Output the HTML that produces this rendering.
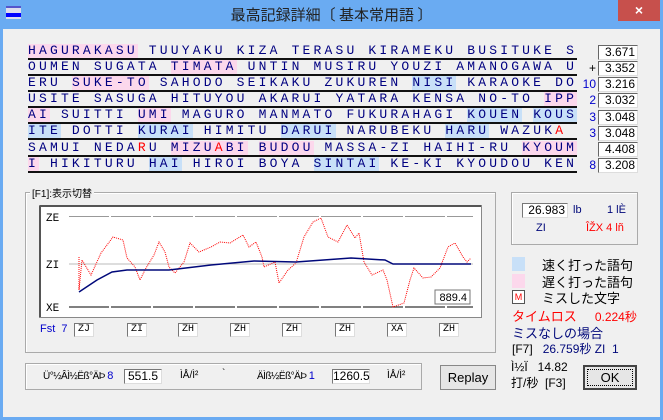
<!DOCTYPE html>
<html><head><meta charset="utf-8"><style>
*{margin:0;padding:0;box-sizing:border-box}
body{width:663px;height:420px;background:#6aabf2;position:relative;overflow:hidden;font-family:"Liberation Sans","Noto Sans CJK JP",sans-serif}
.abs{position:absolute}
.win{left:3px;top:29px;width:657px;height:388px;background:#f0f0f0}
.title{left:0;top:0;width:663px;height:29px;text-align:center;font-size:15px;line-height:29px;color:#222;font-family:"Noto Sans CJK JP",sans-serif}
.close{left:618px;top:0;width:42px;height:21px;background:#c7504c;color:#fff;text-align:center;font-size:14px;line-height:20px;font-weight:bold}
.row{position:absolute;left:28px;width:549px;height:16px;border-bottom:2px solid #111;font-family:"Liberation Mono",monospace;font-size:13px;letter-spacing:3.18px;color:#000080;white-space:pre;line-height:14px;overflow:hidden}
.p{background:#fcd8ec}.b{background:#c8e0f8}.r{color:#f00}
.sc{position:absolute;left:598px;width:40px;height:15px;background:#fff;border:1px solid #666;border-right-color:#ddd;border-bottom-color:#ddd;font-size:12px;text-align:right;padding-right:2px;line-height:13px;color:#000}
.pre{position:absolute;width:14px;text-align:right;left:582px;font-size:12px;color:#00c}
.grp{border:1px solid #aaa;box-shadow:inset 1px 1px #fff}
.tb{background:#fff;border:1px solid #777;border-right-color:#ddd;border-bottom-color:#ddd;font-size:10px;text-align:center;line-height:12px;font-family:"Liberation Mono",monospace}
.btn{border:1px solid #888;background:#e6e6e6;text-align:center;font-size:13px;line-height:24px}
.j{font-family:"Liberation Sans","Noto Sans CJK JP",sans-serif;font-size:13px}
</style></head><body>
<div class="abs" style="left:6px;top:6px;width:15px;height:13px;background:#dde;border-top:2px solid #55c"><div style="margin-top:5px;height:4px;background:#00f"></div></div>
<div class="abs title">最高記録詳細〔 基本常用語 〕</div>
<div class="abs close">×</div>
<div class="abs win"></div>

<div class="row" style="top:44px"><span class="p">HAGURAKASU</span> TUUYAKU KIZA TERASU KIRAMEKU BUSITUKE S</div>
<div class="row" style="top:60px">OUMEN SUGATA <span class="p">TIMATA</span> UNTIN MUSIRU YOUZI AMANOGAWA U</div>
<div class="row" style="top:76px">ERU <span class="p">SUKE-TO</span> SAHODO SEIKAKU ZUKUREN <span class="b">NISI</span> KARAOKE DO</div>
<div class="row" style="top:92px">USITE SASUGA HITUYOU AKARUI YATARA KENSA NO-TO <span class="p">IPP</span></div>
<div class="row" style="top:108px"><span class="p">AI</span> SUITTI <span class="p">UMI</span> MAGURO MANMATO FUKURAHAGI <span class="b">KOUEN</span> <span class="b">KOUS</span></div>
<div class="row" style="top:124px"><span class="b">ITE</span> DOTTI <span class="b">KURAI</span> HIMITU <span class="b">DARUI</span> NARUBEKU <span class="b">HARU</span> WAZUK<span class="r">A</span></div>
<div class="row" style="top:141px">SAMUI NEDA<span class="r">R</span>U <span class="p">MIZU<span class="r">A</span>BI</span> <span class="p">BUDOU</span> MASSA-ZI HAIHI-RU <span class="p">KYOUM</span></div>
<div class="row" style="top:157px"><span class="p">I</span> HIKITURU <span class="b">HAI</span> HIROI BOYA <span class="b">SINTAI</span> KE-KI KYOUDOU KEN</div>

<div class="sc" style="top:45px">3.671</div>
<div class="pre" style="top:61px;color:#000">+</div><div class="sc" style="top:61px">3.352</div>
<div class="pre" style="top:77px">10</div><div class="sc" style="top:77px">3.216</div>
<div class="pre" style="top:93px">2</div><div class="sc" style="top:93px">3.032</div>
<div class="pre" style="top:110px">3</div><div class="sc" style="top:110px">3.048</div>
<div class="pre" style="top:126px">3</div><div class="sc" style="top:126px">3.048</div>
<div class="sc" style="top:142px">4.408</div>
<div class="pre" style="top:158px">8</div><div class="sc" style="top:158px">3.208</div>

<div class="abs grp" style="left:25px;top:192px;width:471px;height:161px"></div>
<div class="abs j" style="left:30px;top:185px;background:#f0f0f0;padding:0 2px;font-size:10px">[F1]:表示切替</div>
<svg class="abs" style="left:39px;top:205px" width="443" height="113">
<rect x="0.5" y="0.5" width="442" height="112" fill="#fff" stroke="#888"/>
<line x1="1" y1="1" x2="442" y2="1" stroke="#555" stroke-width="2"/>
<line x1="1" y1="1" x2="1" y2="112" stroke="#555" stroke-width="2"/>
<line x1="30" y1="11.5" x2="434" y2="11.5" stroke="#999" stroke-dasharray="40,2"/>
<line x1="30" y1="59" x2="434" y2="59" stroke="#bbb"/>
<line x1="30" y1="102" x2="434" y2="102" stroke="#000" stroke-dasharray="40,2"/>
<text x="7" y="16" font-size="11" font-family="Liberation Mono">ZE</text>
<text x="7" y="63" font-size="11" font-family="Liberation Mono">ZI</text>
<text x="7" y="106" font-size="11" font-family="Liberation Mono">XE</text>
<polyline fill="none" stroke="#f00" stroke-dasharray="1,1" points="40,52 40,85 43,55 52,70 62,48 74,32 84,35 88,53 96,62 101,75 107,63 115,50 120,37 126,47 130,62 136,68 145,57 151,38 160,47 172,42 181,37 191,38 204,30 210,42 217,37 223,52 225,62 236,57 240,78 249,65 257,58 265,32 274,17 282,13 289,32 299,37 308,20 316,33 320,28 325,57 333,70 344,65 348,75 354,102 365,98 371,75 375,63 384,73 392,72 401,63 409,42 416,38 424,52 428,57 432,53"/>
<polyline fill="none" stroke="#00087a" stroke-width="1.5" points="40,87 58,75 73,67 88,65 130,65 172,60 215,56 257,57 312,53 346,55 354,59 432,59"/>
<rect x="396" y="85" width="35" height="14" fill="#fff" stroke="#777"/>
<text x="428" y="96" font-size="11" text-anchor="end">889.4</text>
</svg>
<div class="abs" style="left:40px;top:323px;font-size:11px;color:#00c">Fst&nbsp;&nbsp;7</div>
<div class="abs tb" style="left:74px;top:323px;width:20px;height:14px">ZJ</div>
<div class="abs tb" style="left:127px;top:323px;width:20px;height:14px">ZI</div>
<div class="abs tb" style="left:178px;top:323px;width:20px;height:14px">ZH</div>
<div class="abs tb" style="left:230px;top:323px;width:20px;height:14px">ZH</div>
<div class="abs tb" style="left:282px;top:323px;width:20px;height:14px">ZH</div>
<div class="abs tb" style="left:335px;top:323px;width:20px;height:14px">ZH</div>
<div class="abs tb" style="left:387px;top:323px;width:20px;height:14px">XA</div>
<div class="abs tb" style="left:439px;top:323px;width:20px;height:14px">ZH</div>

<div class="abs grp" style="left:25px;top:363px;width:397px;height:27px"></div>
<div class="abs" style="left:43px;top:370px;font-size:10px;letter-spacing:-0.5px">Ü°½ÂÌ½Ëß°ÄÞ <span style="color:#00c;font-size:11px">8</span></div>
<div class="abs tb" style="left:124px;top:369px;width:38px;height:15px;font-size:12px;font-family:'Liberation Sans'">551.5</div>
<div class="abs" style="left:180px;top:370px;font-size:10px">ÌÅ/Ì²</div>
<div class="abs" style="left:222px;top:368px;font-size:10px">`</div>
<div class="abs" style="left:257px;top:370px;font-size:10px;letter-spacing:-0.5px">ÄÌß½Ëß°ÄÞ <span style="color:#00c;font-size:11px">1</span></div>
<div class="abs tb" style="left:332px;top:369px;width:38px;height:15px;font-size:12px;font-family:'Liberation Sans'">1260.5</div>
<div class="abs" style="left:387px;top:370px;font-size:10px">ÌÅ/Ì²</div>
<div class="abs btn" style="left:440px;top:365px;width:56px;height:25px">Replay</div>

<div class="abs grp" style="left:511px;top:192px;width:127px;height:53px"></div>
<div class="abs tb" style="left:522px;top:203px;width:46px;height:15px;font-size:12px;font-family:'Liberation Sans';text-align:right;padding-right:2px">26.983</div>
<div class="abs" style="left:573px;top:204px;font-size:11px;color:#00087a">lb</div>
<div class="abs" style="left:607px;top:204px;font-size:11px;color:#00087a">1 lÈ</div>
<div class="abs" style="left:536px;top:222px;font-size:11px;color:#00087a">ZI</div>
<div class="abs" style="left:586px;top:222px;font-size:11px;color:#f00">ÎŽX 4 lñ</div>

<div class="abs" style="left:512px;top:257px;width:13px;height:14px;background:#c8e0f8"></div>
<div class="abs j" style="left:542px;top:255px">速く打った語句</div>
<div class="abs" style="left:512px;top:274px;width:13px;height:14px;background:#fcd8ec"></div>
<div class="abs j" style="left:542px;top:272px">遅く打った語句</div>
<div class="abs" style="left:512px;top:290px;width:13px;height:14px;border:1px solid #555;background:#fff;color:#f00;font-size:9px;text-align:center;line-height:12px">M</div>
<div class="abs j" style="left:542px;top:288px">ミスした文字</div>
<div class="abs j" style="left:512px;top:306px;color:#f00">タイムロス&nbsp;&nbsp;&nbsp;&nbsp;&nbsp;<span style="font-size:12px">0.224秒</span></div>
<div class="abs j" style="left:512px;top:323px;color:#00087a">ミスなしの場合</div>
<div class="abs j" style="left:512px;top:340px;font-size:12px">[F7]&nbsp;&nbsp;&nbsp;<span style="color:#00087a">26.759秒 ZI&nbsp;&nbsp;1</span></div>
<div class="abs j" style="left:511px;top:360px;font-size:12px">Ì½Ï&nbsp;&nbsp;&nbsp;14.82</div>
<div class="abs j" style="left:511px;top:374px;font-size:12px">打/秒&nbsp;&nbsp;[F3]</div>
<div class="abs btn" style="left:583px;top:365px;width:54px;height:25px;border:2px solid #444"><div style="margin:2px;border:1px dotted #000;line-height:15px">OK</div></div>
</body></html>
